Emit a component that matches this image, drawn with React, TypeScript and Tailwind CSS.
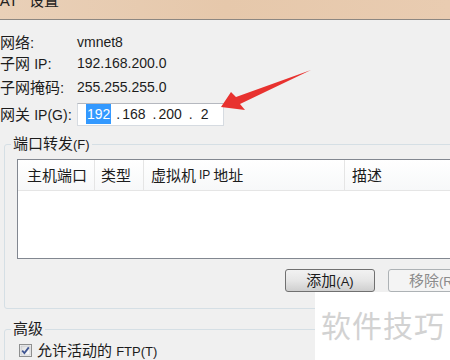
import React from 'react';

// NAT settings dialog, cropped view
const cjk = "font-['Liberation_Sans','Noto_Sans_CJK_SC',sans-serif]";

const InfoRow: React.FC<{ label: React.ReactNode; h: string; children: React.ReactNode }> = ({ label, h, children }) => (
  <div className={`flex items-center ${h}`}>
    <div className="w-[77px] shrink-0 text-[15px] leading-none">{label}</div>
    <div className="text-[14px] leading-none">{children}</div>
  </div>
);

const Checkbox: React.FC = () => (
  <svg width="13" height="13" viewBox="0 0 13 13" className="shrink-0">
    <defs>
      <linearGradient id="cbg" x1="0" y1="0" x2="1" y2="1">
        <stop offset="0" stopColor="#dcdcdc" />
        <stop offset="1" stopColor="#ffffff" />
      </linearGradient>
    </defs>
    <rect x="0.5" y="0.5" width="12" height="12" fill="#f4f4f4" stroke="#8e8f8f" />
    <rect x="2" y="2" width="9" height="9" fill="url(#cbg)" stroke="#b8bcc4" strokeWidth="0.6" />
    <path d="M3.2 6.6 L5.4 9 L9.8 3.4" fill="none" stroke="#3f5592" strokeWidth="1.8" />
  </svg>
);

export default function App() {
  return (
    <div className={`relative w-[450px] h-[360px] overflow-hidden bg-[#f0f0f0] text-[#1c1c1c] ${cjk}`}>
      {/* title bar */}
      <div className="h-[20px] overflow-hidden border-b border-[#8c8782] bg-linear-to-r from-[#e9d0b8] via-[#e6c8ab] to-[#e9ccb1]">
        <div className="-mt-[7px] -ml-[11px] flex text-[15px] leading-[15px] text-[#222]">
          <span>NAT</span>
          <span className="ml-[11px]">设置</span>
        </div>
      </div>

      {/* network info */}
      <div className="pt-[12px]">
        <InfoRow label="网络:" h="h-[20px]">vmnet8</InfoRow>
        <InfoRow label={<>子网 <span className="text-[14px]">IP</span>:</>} h="h-[22px]">192.168.200.0</InfoRow>
        <InfoRow label="子网掩码:" h="h-[26px]">255.255.255.0</InfoRow>
        <div className="flex h-[28px] items-center">
          <div className="w-[77px] shrink-0 text-[15px] leading-none">
            网关 <span className="text-[14px]">IP(G)</span>:
          </div>
          <div className="flex h-[23px] w-[147px] items-center border border-[#d6dbe1] border-t-[#b5b8bf] bg-white pl-[8px] text-[14px] leading-none">
            <span className="bg-[#3399ff] px-[1px] py-[3px] text-white">192</span>
            <span className="ml-[5px]">.</span>
            <span className="ml-[2px]">168</span>
            <span className="ml-[7px]">.</span>
            <span className="ml-[2px]">200</span>
            <span className="ml-[7px]">.</span>
            <span className="ml-[8px]">2</span>
          </div>
        </div>
      </div>

      {/* port forwarding */}
      <fieldset className="ml-[4px] mt-[7px] w-[487px] rounded-[3px] border border-[#d5dfe5] px-[12px] pb-[16px]">
        <legend className="-ml-[6px] px-[2px] text-[15px] leading-[18px]">
          端口转发<span className="text-[13px]">(F)</span>
        </legend>
        <div className="mt-[5px] h-[100px] border border-[#828790] bg-white">
          <div className="flex h-[31px] border-b border-[#e5e5e5] bg-linear-to-b from-white to-[#f7f8f9] text-[15px] leading-none">
            <div className="flex w-[77px] items-center border-r border-[#e5e5e5] pl-[9px]">主机端口</div>
            <div className="flex w-[49px] items-center border-r border-[#e5e5e5] pl-[6px]">类型</div>
            <div className="flex w-[201px] items-center border-r border-[#e5e5e5] pl-[7px]">
              虚拟机 <span className="mx-[3px] text-[12px]">IP</span> 地址
            </div>
            <div className="flex items-center pl-[7px]">描述</div>
          </div>
        </div>
        <div className="mt-[10px] flex justify-end gap-[13px]">
          <button className="h-[23px] w-[90px] rounded-[3px] border border-[#707070] bg-linear-to-b from-[#f2f2f2] via-[#e6e6e6] to-[#cfcfcf] text-[15px] leading-none text-[#1c1c1c]">
            添加<span className="text-[13px]">(A)</span>
          </button>
          <button className="h-[23px] w-[90px] rounded-[3px] border border-[#adb2b5] bg-[#f4f4f4] text-[15px] leading-none text-[#8b8b8b]">
            移除<span className="text-[13px]">(R)</span>
          </button>
        </div>
      </fieldset>

      {/* advanced */}
      <fieldset className="ml-[4px] mt-[11px] w-[487px] rounded-[3px] border border-[#d5dfe5] px-[14px] pb-[10px]">
        <legend className="-ml-[8px] px-[2px] text-[15px] leading-[18px]">高级</legend>
        <div className="mt-[3px] flex h-[18px] items-center gap-[5px]">
          <Checkbox />
          <span className="text-[15px] leading-none">
            允许活动的 <span className="text-[13px]">FTP(T)</span>
          </span>
        </div>
      </fieldset>

      {/* red annotation arrow */}
      <svg className="absolute left-[215px] top-[65px]" width="100" height="50" viewBox="215 65 100 50">
        <path d="M221 107 L231 92 L236 97 L311 70 L240 104 L245 110 Z" fill="#e8322f" />
      </svg>

      {/* watermark */}
      <div className="absolute left-[315px] top-[292px] flex h-[68px] w-[135px] items-start bg-white pl-[6px] pt-[16px]">
        <span className="text-[30px] leading-[32px] tracking-[1px] text-[#d2d2d2] font-['Noto_Sans_CJK_SC',sans-serif]">软件技巧</span>
      </div>
    </div>
  );
}
